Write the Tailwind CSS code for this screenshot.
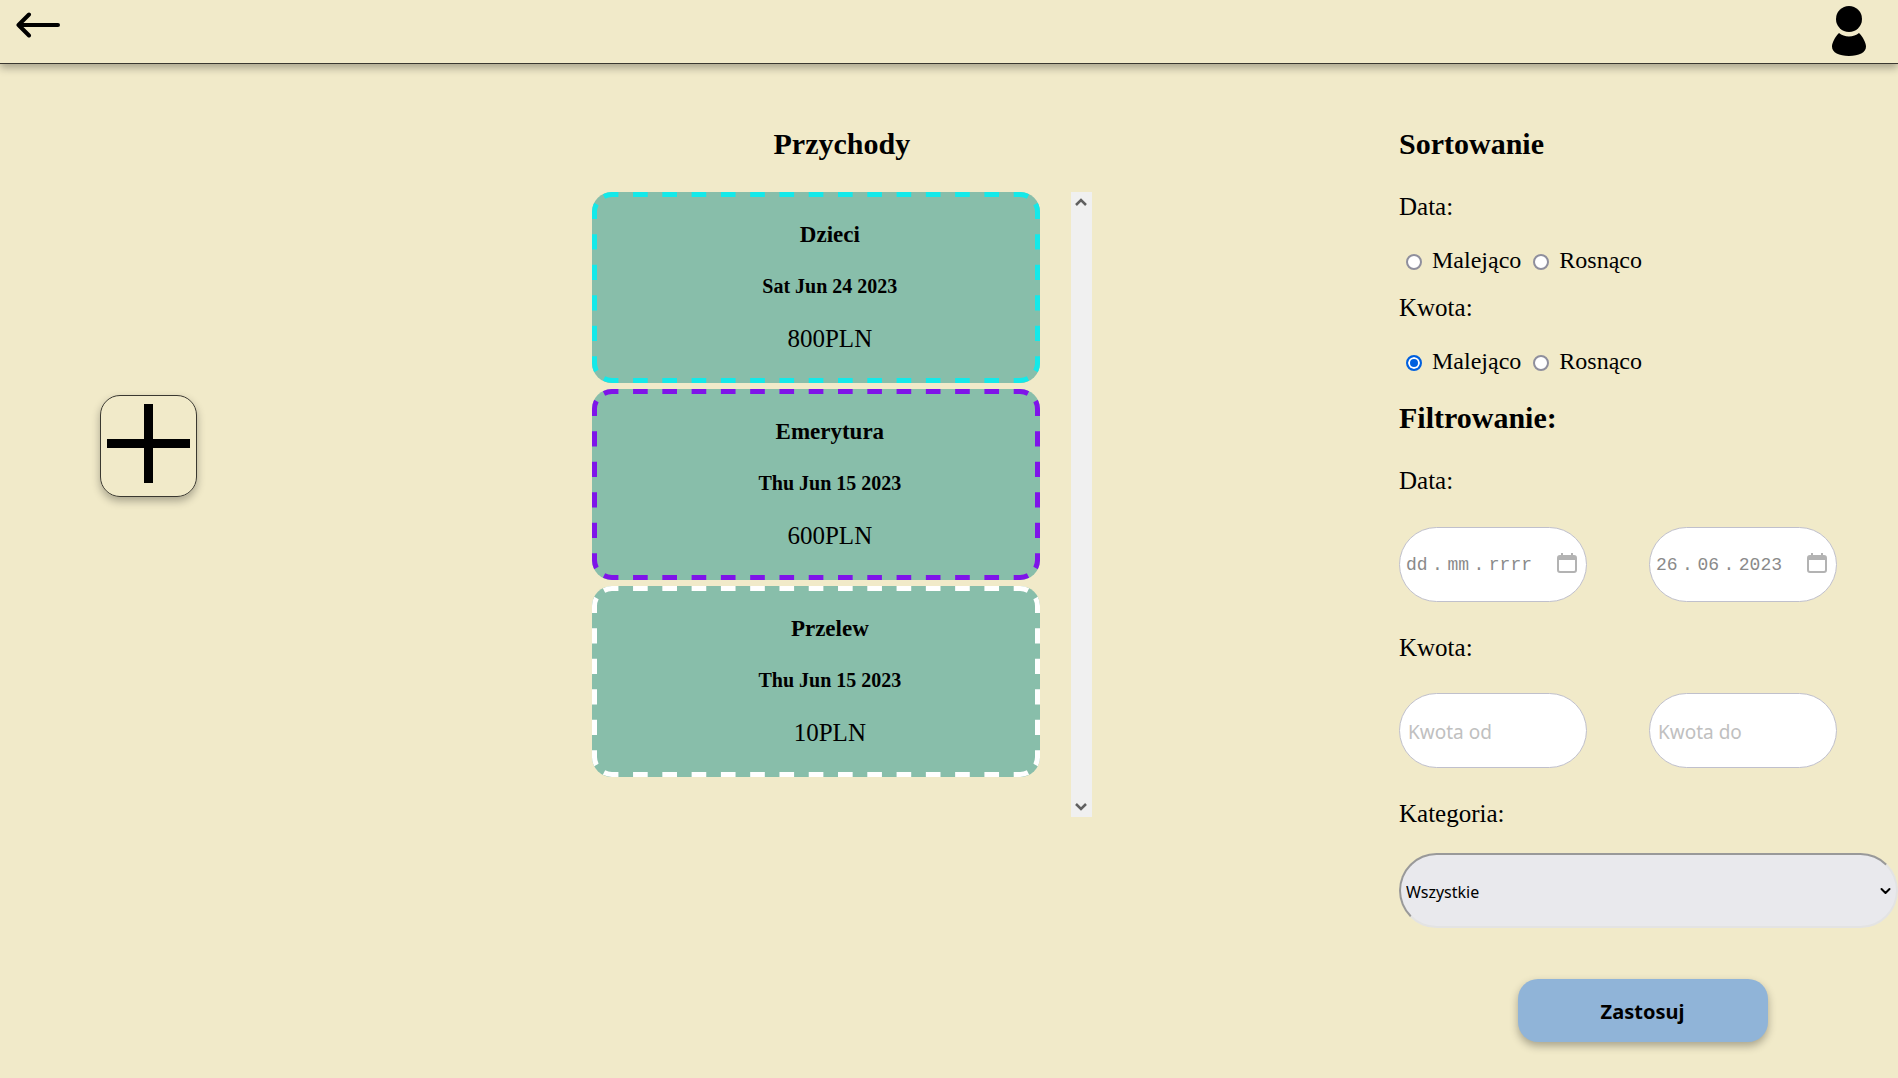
<!DOCTYPE html>
<html lang="pl">
<head>
<meta charset="utf-8">
<title>Przychody</title>
<script src="https://cdn.jsdelivr.net/npm/@tailwindcss/browser@4"></script>
</head>
<body class="min-h-screen bg-[#f1eac9] font-['Liberation_Serif',serif] text-[25px] leading-7 text-black">
<!-- Dashed frame shared by the income cards; takes its colour from currentColor -->
<svg class="hidden" aria-hidden="true">
  <symbol id="dashes" viewBox="0 0 448 191">
    <g fill="none" stroke="currentColor" stroke-width="5">
      <g stroke-dasharray="14.64">
        <path d="M12 4.400A17.500 17.500 0 0 1 20 2.500H428A17.500 17.500 0 0 1 436 4.400"/>
        <path d="M12 186.600A17.500 17.500 0 0 0 20 188.500H428A17.500 17.500 0 0 0 436 186.600"/>
      </g>
      <g stroke-dasharray="15.24">
        <path d="M4.400 12A17.500 17.500 0 0 0 2.500 20V171A17.500 17.500 0 0 0 4.400 179"/>
        <path d="M443.600 12A17.500 17.500 0 0 1 445.500 20V171A17.500 17.500 0 0 1 443.600 179"/>
      </g>
    </g>
  </symbol>
</svg>

<header class="flex h-16 items-start justify-between border-b border-[#3a3830] pl-4 pr-8 shadow-[0_4px_8px_rgba(0,0,0,0.3)]">
  <a href="#" aria-label="Wstecz" class="mt-3">
    <svg class="h-[26px] w-11" viewBox="0 0 44 26" fill="none" stroke="#000" stroke-width="4" stroke-linecap="round" stroke-linejoin="round"><path d="M42 13H2.500M13 2.500L2.500 13L13 23.500"/></svg>
  </a>
  <a href="#" aria-label="Profil" class="mt-[6px]">
    <svg class="h-[50px] w-[34px]" viewBox="0 0 34 50"><circle cx="17" cy="13" r="13"/><path d="M7 27C12 31.500 22 31.500 27 27C31 31 34 37 34 40.500C34 46.500 27 50 17 50S0 46.500 0 40.500C0 37 3 31 7 27Z"/></svg>
  </a>
</header>

<main class="grid grid-cols-[15%_1fr_499px] items-start pt-[62px]">
  <div class="pl-[100px] pt-[269px]">
    <button aria-label="Dodaj przychód" class="flex h-[102px] w-[97px] justify-center rounded-[20px] border border-[#3a3830] pt-2 shadow-[0_4px_8px_rgba(0,0,0,0.3)]">
      <svg class="h-20 w-[83px]" viewBox="0 0 83 80" stroke="#000" stroke-width="9"><path d="M0 39.500H83M41.500 0V79"/></svg>
    </button>
  </div>

  <section class="mx-auto w-[500px]">
    <h2 class="text-center text-[30px] font-bold leading-9">Przychody</h2>
    <div class="mt-[30px] flex h-[625px] justify-between">
      <ul class="flex w-[448px] flex-col gap-[6px] text-center">
        <li class="relative rounded-[20px] bg-[#88beaa] pb-[30px] pl-7 pt-[29px]">
          <svg class="absolute inset-0 size-full text-[#14e9e9]" aria-hidden="true"><use href="#dashes"/></svg>
          <h3 class="text-[23px] font-bold">Dzieci</h3>
          <p class="mt-[25px] text-xl leading-6 font-bold">Sat Jun 24 2023</p>
          <p class="mt-[27px]">800PLN</p>
        </li>
        <li class="relative rounded-[20px] bg-[#88beaa] pb-[30px] pl-7 pt-[29px]">
          <svg class="absolute inset-0 size-full text-[#7f14e9]" aria-hidden="true"><use href="#dashes"/></svg>
          <h3 class="text-[23px] font-bold">Emerytura</h3>
          <p class="mt-[25px] text-xl leading-6 font-bold">Thu Jun 15 2023</p>
          <p class="mt-[27px]">600PLN</p>
        </li>
        <li class="relative rounded-[20px] bg-[#88beaa] pb-[30px] pl-7 pt-[29px]">
          <svg class="absolute inset-0 size-full text-white" aria-hidden="true"><use href="#dashes"/></svg>
          <h3 class="text-[23px] font-bold">Przelew</h3>
          <p class="mt-[25px] text-xl leading-6 font-bold">Thu Jun 15 2023</p>
          <p class="mt-[27px]">10PLN</p>
        </li>
      </ul>
      <div class="flex w-[21px] flex-col items-center justify-between bg-[#f0f0f0] py-[5px]" aria-hidden="true">
        <svg class="h-[10px] w-3" viewBox="0 0 12 10" fill="none" stroke="#606060" stroke-width="2.500"><path d="M1 8L6 3L11 8"/></svg>
        <svg class="h-[10px] w-3" viewBox="0 0 12 10" fill="none" stroke="#606060" stroke-width="2.500"><path d="M1 2L6 7L11 2"/></svg>
      </div>
    </div>
  </section>

  <form class="flex flex-col">
    <h2 class="text-[30px] font-bold leading-9">Sortowanie</h2>
    <p class="mt-[31px]">Data:</p>
    <div class="mt-[25px] flex gap-3 pl-[7px] text-2xl leading-7">
      <label class="flex items-center gap-[10px]"><input type="radio" name="sort-data" class="mt-1 size-4 appearance-none rounded-full border-2 border-[#8f8f9d] bg-white checked:border-[#0060df] checked:bg-[#0060df] checked:shadow-[inset_0_0_0_2px_#fff]">Malejąco</label>
      <label class="flex items-center gap-[10px]"><input type="radio" name="sort-data" class="mt-1 size-4 appearance-none rounded-full border-2 border-[#8f8f9d] bg-white checked:border-[#0060df] checked:bg-[#0060df] checked:shadow-[inset_0_0_0_2px_#fff]">Rosnąco</label>
    </div>
    <p class="mt-5">Kwota:</p>
    <div class="mt-[25px] flex gap-3 pl-[7px] text-2xl leading-7">
      <label class="flex items-center gap-[10px]"><input type="radio" name="sort-kwota" checked class="mt-1 size-4 appearance-none rounded-full border-2 border-[#8f8f9d] bg-white checked:border-[#0060df] checked:bg-[#0060df] checked:shadow-[inset_0_0_0_2px_#fff]">Malejąco</label>
      <label class="flex items-center gap-[10px]"><input type="radio" name="sort-kwota" class="mt-1 size-4 appearance-none rounded-full border-2 border-[#8f8f9d] bg-white checked:border-[#0060df] checked:bg-[#0060df] checked:shadow-[inset_0_0_0_2px_#fff]">Rosnąco</label>
    </div>

    <h2 class="mt-[25px] text-[30px] font-bold leading-9">Filtrowanie:</h2>
    <p class="mt-[31px]">Data:</p>
    <div class="mt-8 flex gap-[62px]">
      <div class="flex h-[75px] w-[188px] items-center rounded-full border border-[#c0c0cc] bg-white pl-[6px] pr-[9px]">
        <input type="text" aria-label="Data od" value="dd&#8197;.&#8197;mm&#8197;.&#8197;rrrr" class="min-w-0 flex-1 font-['Liberation_Mono',monospace] text-lg text-[#8a8a8a] outline-none">
        <svg class="mb-[3px] h-5 w-5" viewBox="0 0 20 20" fill="#b3b3b3"><path fill-rule="evenodd" d="M4 0h2v2h8V0h2v2h1a3 3 0 0 1 3 3v12a3 3 0 0 1-3 3H3a3 3 0 0 1-3-3V5a3 3 0 0 1 3-3h1ZM2 7v10a1 1 0 0 0 1 1h14a1 1 0 0 0 1-1V7Z"/></svg>
      </div>
      <div class="flex h-[75px] w-[188px] items-center rounded-full border border-[#c0c0cc] bg-white pl-[6px] pr-[9px]">
        <input type="text" aria-label="Data do" value="26&#8197;.&#8197;06&#8197;.&#8197;2023" class="min-w-0 flex-1 font-['Liberation_Mono',monospace] text-lg text-[#8a8a8a] outline-none">
        <svg class="mb-[3px] h-5 w-5" viewBox="0 0 20 20" fill="#b3b3b3"><path fill-rule="evenodd" d="M4 0h2v2h8V0h2v2h1a3 3 0 0 1 3 3v12a3 3 0 0 1-3 3H3a3 3 0 0 1-3-3V5a3 3 0 0 1 3-3h1ZM2 7v10a1 1 0 0 0 1 1h14a1 1 0 0 0 1-1V7Z"/></svg>
      </div>
    </div>
    <p class="mt-8">Kwota:</p>
    <div class="mt-[31px] flex gap-[62px]">
      <input type="text" aria-label="Kwota od" placeholder="Kwota od" class="h-[75px] w-[188px] rounded-full border border-[#c0c0cc] bg-white px-2 pt-[2px] font-['Noto_Sans',sans-serif] text-[19px] placeholder:text-[#c0c0c0]">
      <input type="text" aria-label="Kwota do" placeholder="Kwota do" class="h-[75px] w-[188px] rounded-full border border-[#c0c0cc] bg-white px-2 pt-[2px] font-['Noto_Sans',sans-serif] text-[19px] placeholder:text-[#c0c0c0]">
    </div>
    <label for="kategoria" class="mt-8">Kategoria:</label>
    <div class="relative mt-[25px]">
      <select id="kategoria" class="h-[75px] w-full appearance-none rounded-full border-2 border-b-[#e3e3e3] border-l-[#999] border-r-[#e3e3e3] border-t-[#999] bg-[#e9e9ed] px-[5px] pt-[2px] font-['Noto_Sans',sans-serif] text-base"><option>Wszystkie</option></select>
      <svg class="pointer-events-none absolute right-[7px] top-[34px] h-2 w-[11px]" viewBox="0 0 11 8" fill="none" stroke="#000" stroke-width="2" stroke-linecap="round" stroke-linejoin="round"><path d="M1.500 2L5.500 6L9.500 2"/></svg>
    </div>
    <button type="button" class="mb-9 mr-3 mt-[51px] h-[63px] w-[250px] self-center rounded-[20px] bg-[#90b4d8] pt-[3px] font-['Noto_Sans',sans-serif] text-xl font-bold shadow-[0_4px_8px_rgba(0,0,0,0.3)]">Zastosuj</button>
  </form>
</main>
</body>
</html>
